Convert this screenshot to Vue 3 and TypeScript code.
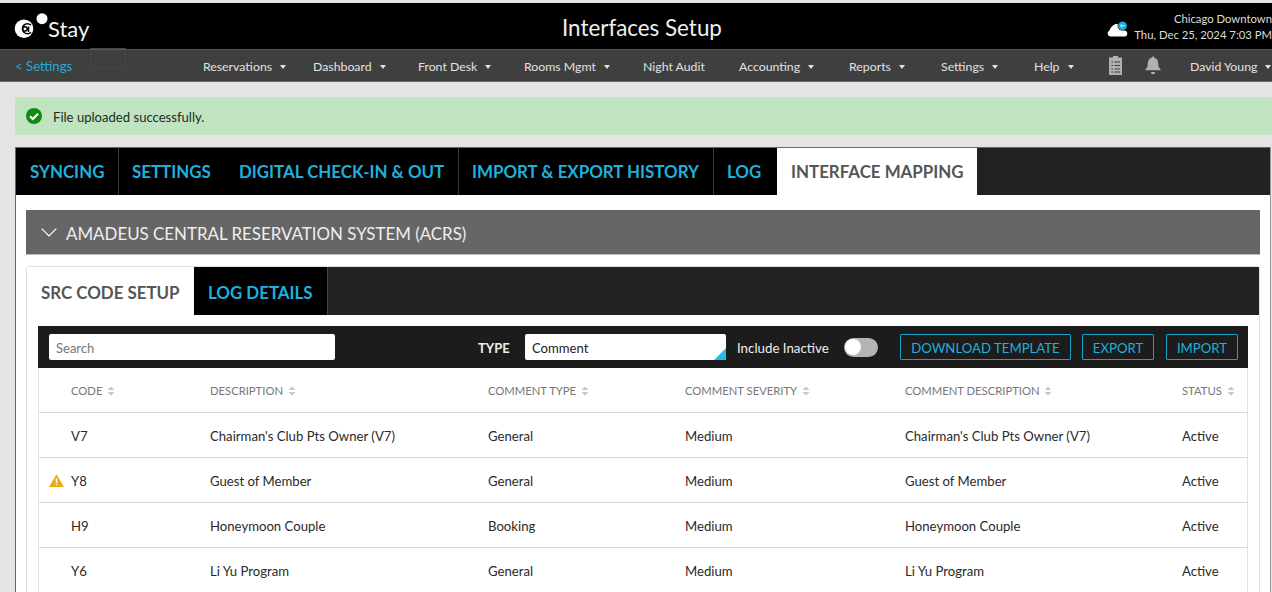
<script setup lang="ts">
const navItems = [
  { label: 'Reservations', caret: true, w: 110 },
  { label: 'Dashboard', caret: true, w: 105 },
  { label: 'Front Desk', caret: true, w: 106 },
  { label: 'Rooms Mgmt', caret: true, w: 119 },
  { label: 'Night Audit', caret: false, w: 96 },
  { label: 'Accounting', caret: true, w: 110 },
  { label: 'Reports', caret: true, w: 92 },
  { label: 'Settings', caret: true, w: 93 },
  { label: 'Help', caret: true, w: 75 },
];

const mainTabs = [
  { label: 'SYNCING', w: 103, line: true },
  { label: 'SETTINGS', w: 107, line: false },
  { label: 'DIGITAL CHECK-IN & OUT', w: 233, line: true },
  { label: 'IMPORT & EXPORT HISTORY', w: 255, line: true },
  { label: 'LOG', w: 63, line: false },
];

const columns = ['CODE', 'DESCRIPTION', 'COMMENT TYPE', 'COMMENT SEVERITY', 'COMMENT DESCRIPTION', 'STATUS'];

const rows = [
  { code: 'V7', desc: "Chairman's Club Pts Owner (V7)", type: 'General', warn: false },
  { code: 'Y8', desc: 'Guest of Member', type: 'General', warn: true },
  { code: 'H9', desc: 'Honeymoon Couple', type: 'Booking', warn: false },
  { code: 'Y6', desc: 'Li Yu Program', type: 'General', warn: false },
];
</script>

<template>
  <div class="page">
    <header class="top">
      <div class="brand">
        <svg class="logo" width="35" height="30" viewBox="0 0 35 30">
          <circle cx="11" cy="18.700" r="9.300" fill="#fff" />
          <path d="M18 15.200a5 5 0 1 0 0 7M12 16.700a2.200 2.200 0 1 0 .01 0M15.500 16.500v5.500" fill="none" stroke="#000" stroke-width="1.500" />
          <circle cx="29" cy="8.700" r="5.500" fill="#fff" />
        </svg>
        <span class="brand-name">Stay</span>
      </div>
      <h1>Interfaces Setup</h1>
      <div class="where">
        <svg class="cloud" width="21" height="16" viewBox="0 1 21 16">
          <path d="M3.500 16.500a3 3 0 0 1-1.200-5.700C3 8.500 5 5.200 8 4.200c2.500-.8 4.500 0 6 1.800l3 4.500a3 3 0 0 1 .5 6z" fill="#fff" />
          <circle cx="15.500" cy="5.800" r="4.900" fill="#000" />
          <circle cx="15.500" cy="5.800" r="4.400" fill="#1fa8d8" />
          <path d="M18 5.800h-4.500M15 4.200l-1.600 1.600 1.600 1.600" stroke="#d8f2fb" stroke-width=".9" fill="none" />
        </svg>
        <div class="where-text">
          <div>Chicago Downtown</div>
          <div>Thu, Dec 25, 2024 7:03 PM</div>
        </div>
      </div>
    </header>

    <nav class="nav">
      <a class="back">&lt; Settings</a>
      <span class="ghost"></span>
      <div class="nav-items">
        <span v-for="item in navItems" :key="item.label" class="nav-item" :style="{ width: item.w + 'px' }">
          {{ item.label }}<i v-if="item.caret" class="caret"></i>
        </span>
      </div>
      <svg class="clip" width="15" height="20" viewBox="0 0 15 20">
        <path d="M1 2.500h4V1h5v1.500h4V20H1z" fill="#b0b0b0" />
        <path d="M3.500 7h1.500M6.500 7h5.500M3.500 10.500h1.500M6.500 10.500h5.500M3.500 14h1.500M6.500 14h5.500M3.500 17h1.500M6.500 17h5.500" stroke="#3f3f3f" stroke-width="1.100" />
      </svg>
      <svg class="bell" width="16" height="19" viewBox="0 0 16 19">
        <path d="M8 .5c.8 0 1.300.6 1.300 1.300 2.700.6 3.900 2.900 3.900 5.700 0 3 .8 4.300 2.300 5.700v1.100H.5v-1.100C2 11.800 2.800 10.500 2.800 7.500c0-2.800 1.200-5.100 3.900-5.700C6.700 1.100 7.200.5 8 .5z" fill="#b0b0b0" />
        <path d="M5.800 16h4.400a2.200 2.200 0 0 1-4.400 0z" fill="#b0b0b0" />
      </svg>
      <span class="user">David Young<i class="caret"></i></span>
    </nav>

    <main class="body">
      <div class="alert">
        <svg width="16" height="16" viewBox="0 0 16 16">
          <circle cx="8" cy="8" r="8" fill="#118a11" />
          <path d="M4 8.300l2.800 2.700L12 5.700" stroke="#fff" stroke-width="2.200" fill="none" />
        </svg>
        <span>File uploaded successfully.</span>
      </div>

      <section class="panel">
        <div class="main-tabs">
          <span
            v-for="tab in mainTabs"
            :key="tab.label"
            class="main-tab"
            :class="{ line: tab.line }"
            :style="{ width: tab.w + 'px' }"
          >{{ tab.label }}</span>
          <span class="main-tab active">INTERFACE MAPPING</span>
        </div>

        <div class="panel-body">
          <div class="accordion">
            <svg width="16" height="9" viewBox="0 0 16 9">
              <path d="M.7.7L8 8l7.300-7.300" stroke="#fff" stroke-width="1.200" fill="none" />
            </svg>
            <span>AMADEUS CENTRAL RESERVATION SYSTEM (ACRS)</span>
          </div>

          <div class="card">
            <div class="sub-tabs">
              <span class="sub-tab active">SRC CODE SETUP</span>
              <span class="sub-tab">LOG DETAILS</span>
            </div>

            <div class="card-body">
              <div class="toolbar">
                <div class="search">Search</div>
                <span class="type-label">TYPE</span>
                <div class="type-select">Comment<i class="corner"></i></div>
                <span class="inactive">Include Inactive</span>
                <span class="toggle"><i></i></span>
                <button type="button" class="tool-btn download">DOWNLOAD TEMPLATE</button>
                <button type="button" class="tool-btn export">EXPORT</button>
                <button type="button" class="tool-btn import">IMPORT</button>
              </div>

              <div class="table">
                <div class="tr head">
                  <span v-for="col in columns" :key="col" class="th">
                    {{ col }}
                    <svg width="8" height="10" viewBox="0 0 8 10">
                      <path d="M4 .5L7.500 4H.5zM4 9.500L.5 6h7z" fill="#c8c8c8" />
                    </svg>
                  </span>
                </div>
                <div v-for="row in rows" :key="row.code" class="tr">
                  <span class="code">
                    <svg v-if="row.warn" class="warn" width="15" height="13" viewBox="0 0 15 13">
                      <path d="M7.500.3L15 13H0z" fill="#f0ab0b" />
                      <path d="M6.800 4.300h1.400v4.700H6.800zM6.800 9.900h1.400v1.400H6.800z" fill="#fff" />
                    </svg>
                    {{ row.code }}
                  </span>
                  <span>{{ row.desc }}</span>
                  <span>{{ row.type }}</span>
                  <span>Medium</span>
                  <span>{{ row.desc }}</span>
                  <span>Active</span>
                </div>
              </div>
            </div>
          </div>
        </div>
      </section>
    </main>
  </div>
</template>

<style>
html,
body {
  margin: 0;
  height: 592px;
  overflow: hidden;
  background: #e4e4e4;
}
</style>

<style scoped>
.page {
  width: 1272px;
  height: 592px;
  overflow: hidden;
  padding-top: 3px;
  box-sizing: border-box;
  font-family: Lato, "Open Sans", sans-serif;
  color: #222;
}

.top {
  height: 46px;
  background: #000;
  display: flex;
  align-items: center;
  position: relative;
  color: #fff;
}

.brand {
  display: flex;
  align-items: center;
  padding-left: 13px;
}

.logo {
  margin-top: -3px;
}

.brand-name {
  font-size: 22px;
  margin-top: 4px;
  color: #f2f2f2;
}

.top h1 {
  position: absolute;
  left: 562px;
  top: 11px;
  margin: 0;
  font-size: 22.400px;
  line-height: 28px;
  font-weight: 400;
  color: #eee;
}

.where {
  margin-left: auto;
  display: flex;
  align-items: flex-end;
  gap: 6px;
  margin-top: 2px;
}

.cloud {
  margin-bottom: 6px;
}

.where-text {
  font-size: 11.300px;
  line-height: 16px;
  white-space: nowrap;
  text-align: right;
  color: #ddd;
}

.nav {
  height: 33px;
  background: #3f3f3f;
  border-top: 1px solid #555;
  border-bottom: 1px solid #6a6a6a;
  box-sizing: border-box;
  display: flex;
  align-items: center;
  font-size: 12.300px;
  color: #e2e2e2;
  position: relative;
}

.back {
  color: #24a9d8;
  font-size: 13.200px;
  margin-left: 15px;
  width: 188px;
  flex: none;
  padding-top: 1px;
}

.ghost {
  position: absolute;
  left: 90px;
  top: -2px;
  width: 34px;
  height: 19px;
  border: 1px solid #464646;
}

.nav-items {
  display: flex;
  width: 905px;
  flex: none;
  padding-top: 1px;
}

.nav-item {
  flex: none;
  white-space: nowrap;
}

.caret {
  display: inline-block;
  margin-left: 8px;
  vertical-align: 2px;
  border-left: 3.500px solid transparent;
  border-right: 3.500px solid transparent;
  border-top: 4px solid #e2e2e2;
}

.clip {
  flex: none;
  margin-bottom: 1px;
}

.bell {
  flex: none;
  margin-left: 22px;
}

.user {
  margin-left: 29px;
  padding-top: 1px;
  white-space: nowrap;
}

.body {
  padding: 15px 1px 0 15px;
}

.alert {
  height: 38px;
  background: #c0e4bf;
  border-radius: 2px;
  margin-right: -1px;
  display: flex;
  align-items: center;
  gap: 11px;
  padding-left: 11px;
  font-size: 13.100px;
  color: #1f2a1f;
}

.alert span {
  padding-top: 1px;
}

.panel {
  margin-top: 12px;
  border-left: 1px solid #666;
  border-right: 1px solid #999;
  background: #fff;
}

.main-tabs {
  height: 48px;
  background: #222;
  border-top: 1px solid #666;
  box-sizing: border-box;
  display: flex;
}

.main-tab {
  flex: none;
  box-sizing: border-box;
  background: #000;
  color: #1eb1dd;
  font-size: 16.900px;
  font-weight: 700;
  line-height: 48px;
  padding-left: 13px;
  white-space: nowrap;
}

.main-tab:first-child {
  padding-left: 14px;
}

.main-tab.line {
  border-right: 1px solid #3a3a3a;
}

.main-tab.active {
  background: #fff;
  color: #555;
  width: 200px;
  padding-left: 14px;
}

.panel-body {
  padding: 15px 10px 0 10px;
}

.accordion {
  height: 45px;
  background: #666;
  border-bottom: 1px solid #bbb;
  box-sizing: border-box;
  display: flex;
  align-items: center;
  gap: 9px;
  padding-left: 15px;
  font-size: 16.900px;
  color: #eee;
}

.accordion span {
  padding-top: 3px;
}

.card {
  margin-top: 11px;
  border: 1px solid #ddd;
  border-radius: 3px 3px 0 0;
  background: #fff;
}

.sub-tabs {
  height: 48px;
  background: #222;
  display: flex;
}

.sub-tab {
  flex: none;
  background: #000;
  color: #1eb1dd;
  font-size: 16.900px;
  font-weight: 700;
  line-height: 51px;
  width: 134px;
  box-sizing: border-box;
  padding-left: 14px;
  border-right: 1px solid #444;
}

.sub-tab.active {
  width: 167px;
  background: #fff;
  color: #555;
  border-right: 0;
}

.card-body {
  padding: 11px 11px 0;
}

.toolbar {
  height: 42px;
  background: #1c1c1c;
  display: flex;
  align-items: center;
  color: #eee;
  font-size: 13px;
}

.search {
  width: 286px;
  height: 26px;
  margin-left: 11px;
  background: #fff;
  border-radius: 2px;
  box-sizing: border-box;
  padding-left: 7px;
  line-height: 28px;
  color: #777;
  font-size: 13px;
  flex: none;
}

.type-label {
  margin-left: 143px;
  width: 47px;
  font-weight: 700;
  flex: none;
  padding-top: 1px;
}

.type-select {
  width: 201px;
  height: 26px;
  background: #fff;
  color: #222;
  position: relative;
  box-sizing: border-box;
  padding-left: 7px;
  line-height: 28px;
  flex: none;
  font-size: 13.100px;
  border-radius: 2px;
}

.corner {
  position: absolute;
  right: 0;
  bottom: 0;
  border-left: 12px solid transparent;
  border-bottom: 12px solid #25bde9;
}

.inactive {
  margin-left: 11px;
  width: 107px;
  flex: none;
  white-space: nowrap;
  font-size: 13.300px;
  padding-top: 1px;
}

.toggle {
  width: 34px;
  height: 19px;
  border-radius: 10px;
  background: #b4b4b4;
  flex: none;
  display: flex;
  align-items: center;
  padding-left: 1px;
  box-sizing: border-box;
}

.toggle i {
  width: 16px;
  height: 16px;
  border-radius: 50%;
  background: #fff;
}

.tool-btn {
  height: 26px;
  background: transparent;
  border: 1px solid #1b9fc8;
  border-radius: 1px;
  color: #1eb1dd;
  font: 400 13.200px Lato, sans-serif;
  padding: 1px 0 0;
  flex: none;
}

.download {
  width: 171px;
  margin-left: 22px;
}

.export {
  width: 72px;
  margin-left: 11px;
}

.import {
  width: 72px;
  margin-left: 12px;
}

.table {
  border-left: 1px solid #e2e2e2;
  border-right: 1px solid #e2e2e2;
}

.tr {
  display: grid;
  grid-template-columns: 139px 278px 197px 220px 277px 1fr;
  height: 45px;
  box-sizing: border-box;
  border-bottom: 1px solid #d8d8d8;
  align-items: center;
  padding: 2px 0 0 32px;
  font-size: 13.150px;
  color: #2a2a2a;
  white-space: nowrap;
}

.tr.head {
  color: #777;
  font-size: 11.250px;
  padding-top: 0;
}

.th svg {
  margin-left: 2px;
  vertical-align: -1px;
}

.code {
  position: relative;
}

.warn {
  position: absolute;
  left: -22px;
  top: 1px;
}
</style>
